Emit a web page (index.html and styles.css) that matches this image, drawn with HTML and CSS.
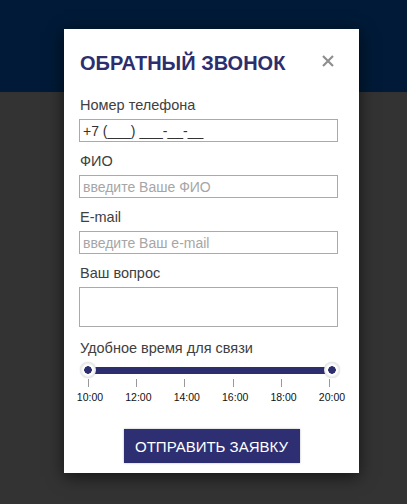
FILE: index.html
```html
<!DOCTYPE html>
<html lang="ru">
<head>
    <meta charset="UTF-8">
    <meta name="viewport" content="width=device-width, initial-scale=1.0">
    <title>Обратный звонок</title>
    <link rel="stylesheet" href="styles.css">
</head>
<body>
    <header class="top-bar"></header>
    <main class="page"></main>

    <div class="modal">
        <div class="modal-body">
            <div class="modal-head">
                <h2>Обратный звонок</h2>
                <button class="close" type="button" aria-label="Закрыть">
                    <svg width="12" height="12" viewBox="0 0 12 12">
                        <path d="M1 1 L11 11 M11 1 L1 11" stroke="#8f8f8f" stroke-width="2.2" fill="none"/>
                    </svg>
                </button>
            </div>

            <label class="field-label">Номер телефона</label>
            <input class="field" type="text" value="+7 (___) ___-__-__">

            <label class="field-label">ФИО</label>
            <input class="field" type="text" placeholder="введите Ваше ФИО">

            <label class="field-label">E-mail</label>
            <input class="field" type="text" placeholder="введите Ваш e-mail">

            <label class="field-label">Ваш вопрос</label>
            <textarea class="field area"></textarea>

            <label class="field-label">Удобное время для связи</label>
            <div class="range">
                <div class="range-track"></div>
                <span class="handle handle-left"></span>
                <span class="handle handle-right"></span>
            </div>
            <div class="scale">
                <div class="mark"><i></i><span>10:00</span></div>
                <div class="mark"><i></i><span>12:00</span></div>
                <div class="mark"><i></i><span>14:00</span></div>
                <div class="mark"><i></i><span>16:00</span></div>
                <div class="mark"><i></i><span>18:00</span></div>
                <div class="mark"><i></i><span>20:00</span></div>
            </div>
        </div>

        <div class="modal-foot">
            <button class="submit" type="button">Отправить заявку</button>
        </div>
    </div>
</body>
</html>
```

FILE: styles.css
```css
body {
    margin: 0;
    padding: 0;
    font-family: 'Liberation Sans', Arial, sans-serif;
    background-color: #333;
    height: 504px;
    overflow: hidden;
}
.top-bar {
    height: 92px;
    background-color: #001a37;
}
.modal {
    position: absolute;
    left: 64px;
    top: 29px;
    width: 295px;
    height: 444px;
    background-color: #fff;
    box-shadow: 0 4px 16px rgba(0, 0, 0, 0.6);
    box-sizing: border-box;
    padding-top: 22px;
}
.modal-body {
    padding: 0 21px 0 15px;
    display: flex;
    flex-direction: column;
}
.modal-head {
    display: flex;
    justify-content: space-between;
    align-items: flex-start;
    margin-bottom: 20px;
}
.modal-head h2 {
    margin: 0 0 0 1px;
    font-size: 20px;
    line-height: 24px;
    font-weight: bold;
    text-transform: uppercase;
    color: #2c2e6e;
}
.close {
    border: none;
    background: none;
    padding: 0;
    margin: 4px 4px 0 0;
    width: 12px;
    height: 12px;
    cursor: pointer;
}
.close svg {
    display: block;
}
.field-label {
    display: block;
    font-size: 14.5px;
    line-height: 20px;
    color: #404040;
    padding-left: 1px;
    margin-bottom: 4px;
}
.field {
    display: block;
    width: 100%;
    height: 23px;
    box-sizing: border-box;
    margin: 0 0 9px;
    padding: 0 3px;
    border: 1px solid #aaa;
    border-radius: 0;
    font-family: inherit;
    font-size: 14px;
    color: #333;
}
.field::placeholder {
    color: #a6a6a6;
}
.area {
    height: 40px;
    resize: none;
    margin-bottom: 11px;
}
.range {
    position: relative;
    height: 16px;
    margin: 1px 6px 0 9px;
}
.range-track {
    position: absolute;
    left: 0;
    right: 0;
    top: 4px;
    height: 7px;
    background-color: #2c2e6e;
}
.handle {
    position: absolute;
    top: -1px;
    width: 16px;
    height: 16px;
    margin-left: -8px;
    border-radius: 50%;
    background: radial-gradient(circle, #2c2e6e 0, #2c2e6e 3.5px, #fff 4px, #fff 5px, #e2e2e2 8px);
    box-shadow: 0 0 1px rgba(0, 0, 0, 0.25);
}
.handle-left {
    left: 0;
}
.handle-right {
    left: 100%;
}
.scale {
    display: flex;
    justify-content: space-between;
    margin: 0 -7px 0 -6px;
}
.mark {
    width: 30px;
    display: flex;
    flex-direction: column;
    align-items: center;
}
.mark i {
    display: block;
    width: 1px;
    height: 8px;
    background-color: #999;
}
.mark span {
    margin: 4px 0 0 4px;
    font-size: 10.5px;
    line-height: 12px;
    color: #111;
}
.modal-foot {
    text-align: center;
    margin-top: 26px;
}
.submit {
    width: 176px;
    height: 34px;
    border: none;
    background-color: #2d2f72;
    color: #fff;
    font-family: inherit;
    font-size: 15px;
    text-transform: uppercase;
    box-shadow: 0 0 2px rgba(0, 0, 0, 0.3);
    cursor: pointer;
}
```
